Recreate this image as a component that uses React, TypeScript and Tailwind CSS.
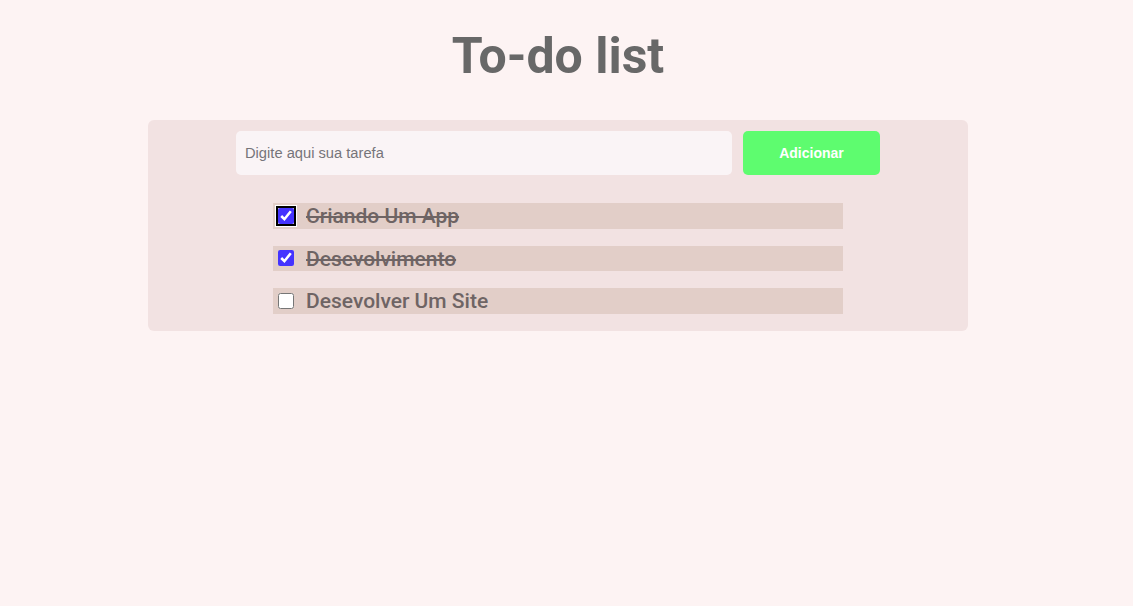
import { useState } from 'react'

type Task = { id: number; text: string; done: boolean }

export default function App() {
  const [tasks, setTasks] = useState<Task[]>([
    { id: 1, text: 'Criando Um App', done: true },
    { id: 2, text: 'Desevolvimento', done: true },
    { id: 3, text: 'Desevolver Um Site', done: false },
  ])
  const [value, setValue] = useState('')

  const toggle = (id: number) =>
    setTasks((prev) => prev.map((t) => (t.id === id ? { ...t, done: !t.done } : t)))

  const add = () => {
    if (!value.trim()) return
    setTasks((prev) => [...prev, { id: Date.now(), text: value.trim(), done: false }])
    setValue('')
  }

  return (
    <div className="min-h-screen bg-[#fdf3f3] pt-[26px] pr-[17px]">
      {/* Title */}
      <h1 className="text-center text-[50px] leading-[60px] font-bold text-[#686868] font-['Roboto',sans-serif]">
        To-do list
      </h1>

      <div className="mx-auto mt-[34px] w-[820px] rounded-md bg-[#f2e2e2] pt-[11px] pb-[17px]">
        {/* Form */}
        <div className="flex justify-center gap-[11px]">
          <input
            value={value}
            onChange={(e) => setValue(e.target.value)}
            placeholder="Digite aqui sua tarefa"
            className="h-[44px] w-[496px] rounded-[5px] bg-[#faf4f6] px-[9px] text-[14.7px] text-[#444] placeholder:text-[#76747a] outline-none font-['Liberation_Sans',Arial,sans-serif]"
          />
          <button
            onClick={add}
            className="h-[44px] w-[137px] rounded-[5px] bg-[#5efc6f] text-[14px] font-bold text-white font-['Liberation_Sans',Arial,sans-serif]"
          >
            Adicionar
          </button>
        </div>

        {/* List */}
        <div className="mx-auto mt-[28px] flex w-[570px] flex-col gap-[17px]">
          {tasks.map((task, idx) => (
            <div key={task.id} className="flex h-[25.5px] items-center bg-[#e2cec8]">
              <input
                type="checkbox"
                checked={task.done}
                onChange={() => toggle(task.id)}
                className={`ml-[5px] h-[16px] w-[16px] accent-[#4433ff] ${
                  idx === 0
                    ? 'rounded-[2px] outline-2 outline-offset-0 outline-black shadow-[0_0_0_3px_white]'
                    : ''
                }`}
              />
              <span
                className={`ml-[12px] pt-[2px] text-[21px] font-medium leading-none text-[#6e6464] font-['Roboto',sans-serif] ${
                  task.done ? 'line-through' : ''
                }`}
              >
                {task.text}
              </span>
            </div>
          ))}
        </div>
      </div>
    </div>
  )
}
